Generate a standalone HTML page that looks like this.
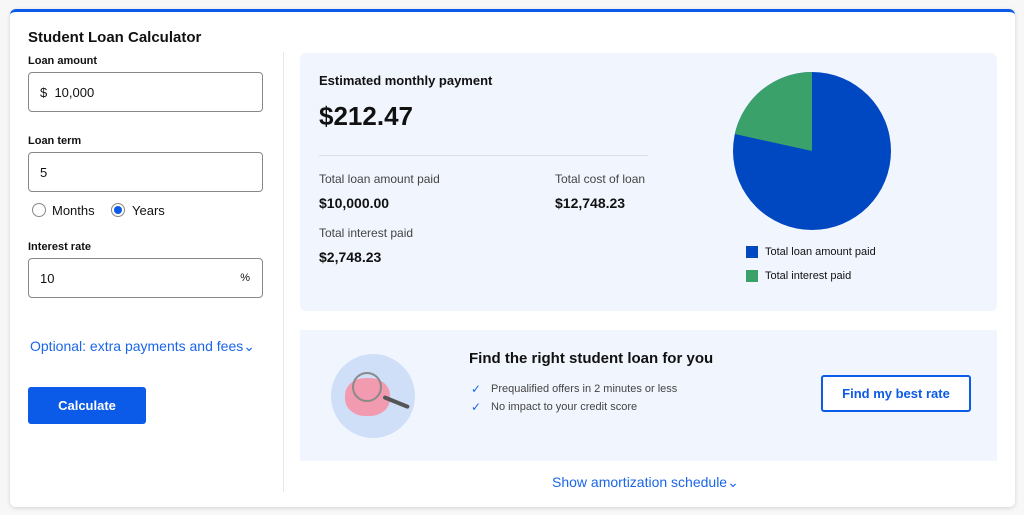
<!DOCTYPE html>
<html><head><style>
*{box-sizing:border-box;margin:0;padding:0}
body{width:1024px;height:515px;background:#f7f7f7;font-family:"Liberation Sans",sans-serif;color:#111;position:relative;overflow:hidden}
.card{position:absolute;left:10px;top:9px;width:1005px;height:498px;background:#fff;border-top:3px solid #0b5be8;border-radius:6px;box-shadow:0 1px 4px rgba(0,0,0,.15)}
.a{position:absolute}
.lbl{font-size:11px;font-weight:bold}
.inp{position:absolute;border:1px solid #888;border-radius:4px;background:#fff;font-size:13px;padding-left:11px;display:flex;align-items:center}
.blue{color:#1a66e8}
</style></head><body>
<div class="card"></div>
<div class="a" style="left:28px;top:29px;font-size:15px;font-weight:bold">Student Loan Calculator</div>
<div class="a lbl" style="left:28px;top:55px">Loan amount</div>
<div class="inp" style="left:28px;top:72px;width:235px;height:40px">$&nbsp; 10,000</div>
<div class="a lbl" style="left:28px;top:135px">Loan term</div>
<div class="inp" style="left:28px;top:152px;width:235px;height:40px">5</div>
<div class="a" style="left:32px;top:203px;width:14px;height:14px;border:1px solid #888;border-radius:50%"></div>
<div class="a" style="left:52px;top:203px;font-size:13px">Months</div>
<div class="a" style="left:111px;top:203px;width:14px;height:14px;border:1px solid #888;border-radius:50%"><div style="margin:2px;width:8px;height:8px;border-radius:50%;background:#0b5be8"></div></div>
<div class="a" style="left:132px;top:203px;font-size:13px">Years</div>
<div class="a lbl" style="left:28px;top:241px">Interest rate</div>
<div class="inp" style="left:28px;top:258px;width:235px;height:40px">10<span style="position:absolute;right:12px;font-size:11px">%</span></div>
<div class="a blue" style="left:30px;top:338px;font-size:14px">Optional: extra payments and fees⌄</div>
<div class="a" style="left:28px;top:387px;width:118px;height:37px;background:#0b5be8;border-radius:3px;color:#fff;font-size:13px;font-weight:bold;text-align:center;line-height:37px">Calculate</div>
<div class="a" style="left:283px;top:52px;width:1px;height:440px;background:#e6e6ee"></div>
<div class="a" style="left:300px;top:53px;width:697px;height:258px;background:#f1f5fe;border-radius:6px"></div>
<div class="a" style="left:319px;top:73px;font-size:13px;font-weight:bold">Estimated monthly payment</div>
<div class="a" style="left:319px;top:101px;font-size:26px;font-weight:bold">$212.47</div>
<div class="a" style="left:319px;top:155px;width:329px;height:1px;background:#dcdfe8"></div>
<div class="a" style="left:319px;top:172px;font-size:12px;color:#444">Total loan amount paid</div>
<div class="a" style="left:319px;top:195px;font-size:14px;font-weight:bold">$10,000.00</div>
<div class="a" style="left:555px;top:172px;font-size:12px;color:#444">Total cost of loan</div>
<div class="a" style="left:555px;top:195px;font-size:14px;font-weight:bold">$12,748.23</div>
<div class="a" style="left:319px;top:226px;font-size:12px;color:#444">Total interest paid</div>
<div class="a" style="left:319px;top:249px;font-size:14px;font-weight:bold">$2,748.23</div>
<svg class="a" style="left:732px;top:72px" width="160" height="160"><circle cx="80" cy="79" r="79" fill="#0047c2"/><path d="M80 79 L80 0 A79 79 0 0 0 2.8 62 Z" fill="#3aa16b"/></svg>
<div class="a" style="left:746px;top:246px;width:12px;height:12px;background:#0047c2"></div>
<div class="a" style="left:765px;top:246px;font-size:11px">Total loan amount paid</div>
<div class="a" style="left:746px;top:270px;width:12px;height:12px;background:#3aa16b"></div>
<div class="a" style="left:765px;top:270px;font-size:11px">Total interest paid</div>
<div class="a" style="left:300px;top:330px;width:697px;height:131px;background:#f1f5fe"></div>
<div class="a" style="left:331px;top:354px;width:84px;height:84px;border-radius:50%;background:#cfdff8"></div>
<div class="a" style="left:345px;top:378px;width:45px;height:38px;border-radius:45%;background:#f29aaf"></div>
<div class="a" style="left:352px;top:372px;width:30px;height:30px;border-radius:50%;border:2px solid #8a8a8a"></div>
<div class="a" style="left:384px;top:395px;width:28px;height:4px;background:#555;transform:rotate(22deg);transform-origin:0 0;border-radius:2px"></div>
<div class="a" style="left:469px;top:350px;font-size:15px;font-weight:bold">Find the right student loan for you</div>
<div class="a blue" style="left:471px;top:382px;font-size:12px">✓</div>
<div class="a" style="left:491px;top:383px;font-size:11px;color:#444">Prequalified offers in 2 minutes or less</div>
<div class="a blue" style="left:471px;top:400px;font-size:12px">✓</div>
<div class="a" style="left:491px;top:401px;font-size:11px;color:#444">No impact to your credit score</div>
<div class="a blue" style="left:821px;top:375px;width:150px;height:37px;border:2px solid #0b5be8;border-radius:3px;background:#fff;font-size:13px;font-weight:bold;text-align:center;line-height:33px;color:#0b5be8">Find my best rate</div>
<div class="a blue" style="left:552px;top:474px;font-size:14px">Show amortization schedule⌄</div>
</body></html>
